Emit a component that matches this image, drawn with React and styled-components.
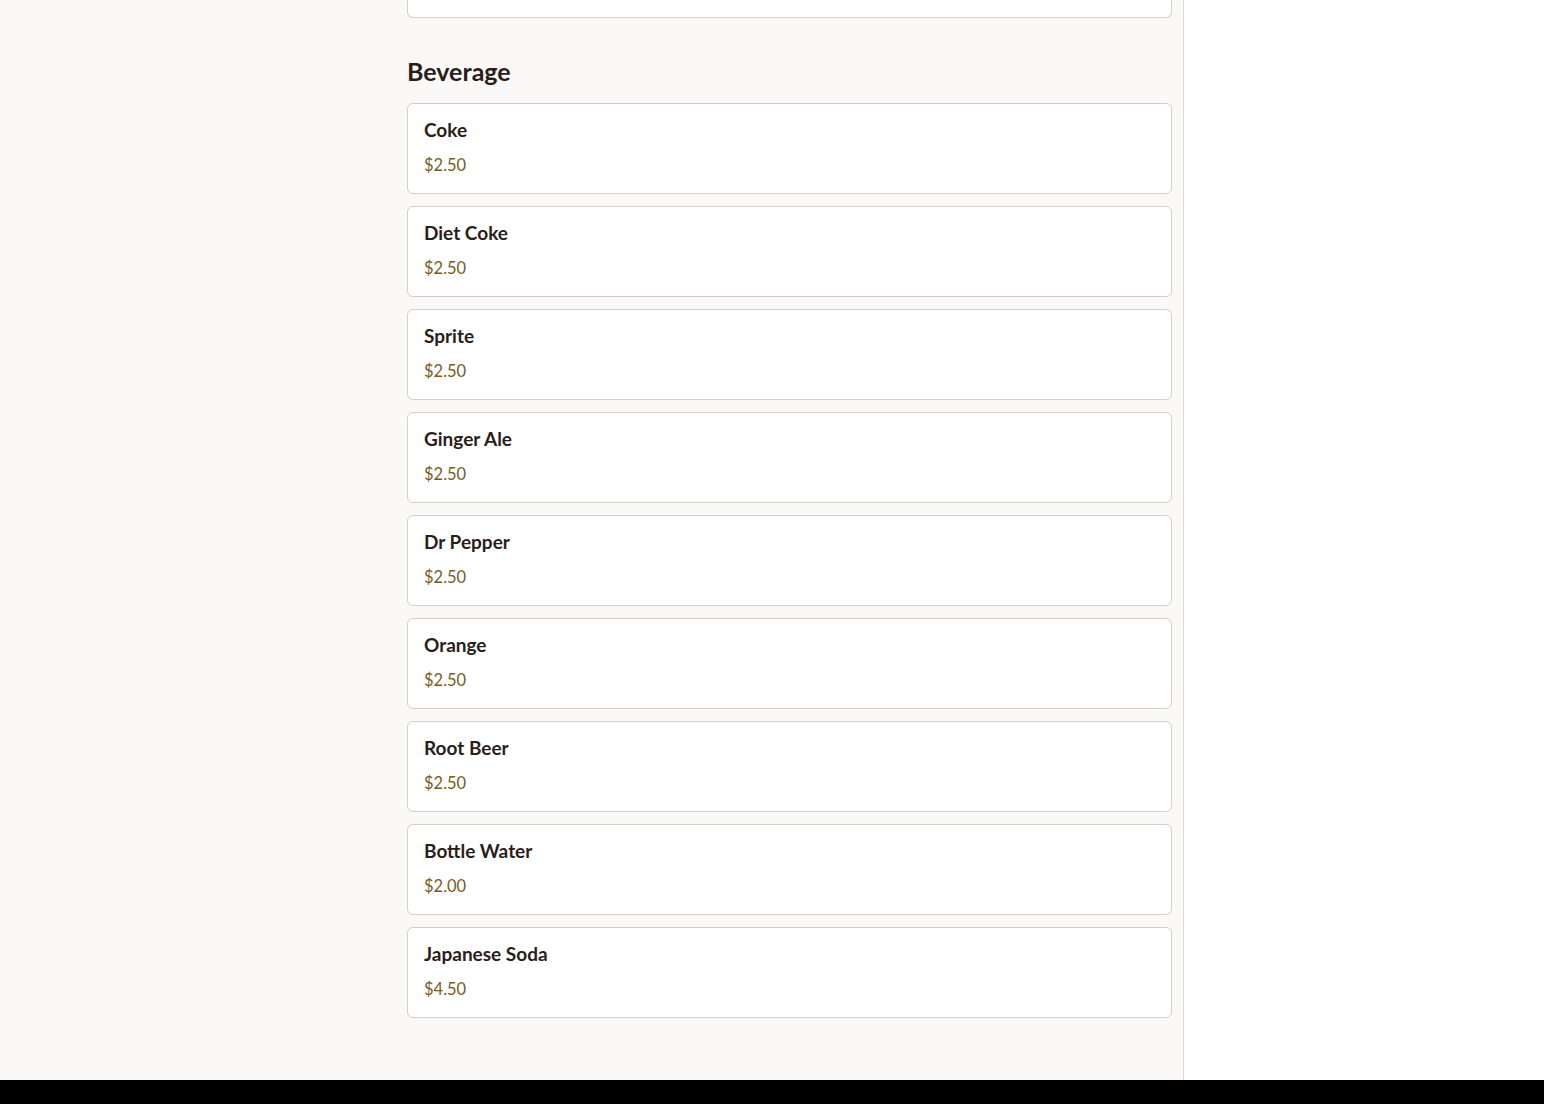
import React from 'react';
import styled, { createGlobalStyle } from 'styled-components';

const GlobalStyle = createGlobalStyle`
  html, body { margin: 0; padding: 0; }
  body {
    font-family: Lato, "Noto Sans", sans-serif;
    background: #ffffff;
    color: #2b1e1a;
  }
`;

const beverages = [
  { name: 'Coke', price: '$2.50' },
  { name: 'Diet Coke', price: '$2.50' },
  { name: 'Sprite', price: '$2.50' },
  { name: 'Ginger Ale', price: '$2.50' },
  { name: 'Dr Pepper', price: '$2.50' },
  { name: 'Orange', price: '$2.50' },
  { name: 'Root Beer', price: '$2.50' },
  { name: 'Bottle Water', price: '$2.00' },
  { name: 'Japanese Soda', price: '$4.50' },
];

const Page = styled.div`
  display: flex;
  flex-direction: column;
  min-height: 100vh;
`;

const Main = styled.div`
  display: flex;
  flex: 1;
`;

const MenuPanel = styled.main`
  width: 1184px;
  box-sizing: border-box;
  background: #faf9f7;
  border-right: 1px solid #dedad6;
  padding: 0 11px 62px 407px;
`;

const Sidebar = styled.aside`
  flex: 1;
  background: #ffffff;
`;

const Footer = styled.footer`
  height: 24px;
  background: #000000;
`;

const Card = styled.div`
  background: #ffffff;
  border: 1px solid #d3cfcb;
  border-radius: 6px;
  padding: 16px 16px 16px;
  box-sizing: border-box;
`;

const CutCard = styled(Card)`
  height: 18px;
  padding: 0;
  border-top: none;
  border-radius: 0 0 6px 6px;
`;

const Section = styled.section`
  margin-top: 37px;
`;

const Heading = styled.h2`
  margin: 0 0 15px;
  font-size: 25px;
  line-height: 33px;
  font-weight: 700;
  color: #2b1e1a;
`;

const List = styled.div`
  display: flex;
  flex-direction: column;
  gap: 12px;
`;

const ItemName = styled.div`
  font-size: 19px;
  line-height: 20px;
  font-weight: 700;
  color: #2b1e1a;
`;

const ItemPrice = styled.div`
  margin-top: 13px;
  font-size: 16.5px;
  line-height: 24px;
  color: #7a5b1d;
`;

export default function App() {
  return (
    <Page>
      <GlobalStyle />
      <Main>
        <MenuPanel>
          <CutCard />
          <Section>
            <Heading>Beverage</Heading>
            <List>
              {beverages.map((item) => (
                <Card key={item.name}>
                  <ItemName>{item.name}</ItemName>
                  <ItemPrice>{item.price}</ItemPrice>
                </Card>
              ))}
            </List>
          </Section>
        </MenuPanel>
        <Sidebar />
      </Main>
      <Footer />
    </Page>
  );
}
